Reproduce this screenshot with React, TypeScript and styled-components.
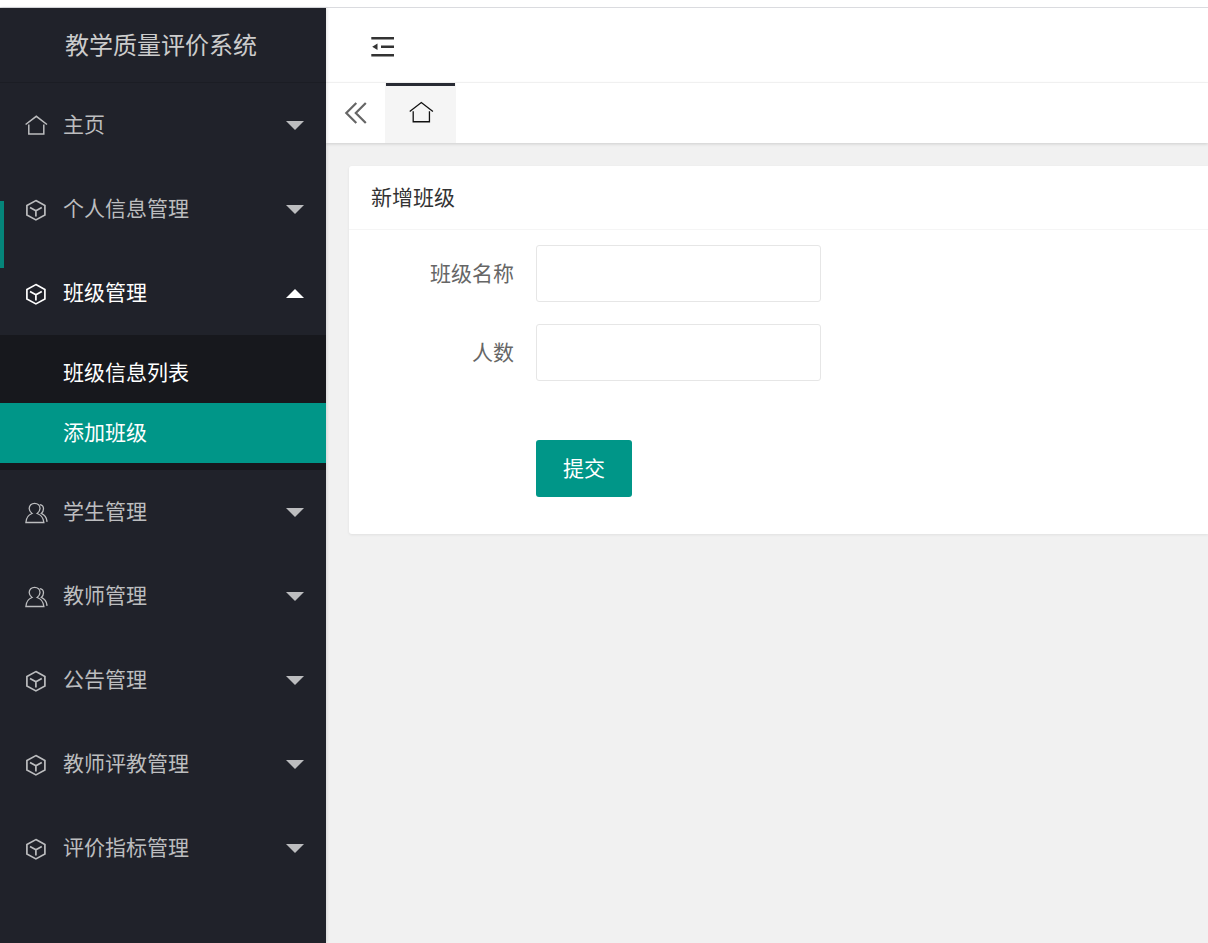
import React from 'react';
import styled, { createGlobalStyle } from 'styled-components';

const GlobalStyle = createGlobalStyle`
  *, *::before, *::after { box-sizing: border-box; }
  body {
    margin: 0;
    background: #f1f1f1;
    color: #333;
    font-family: "Liberation Sans", "Noto Sans CJK SC", sans-serif;
    font-size: 21px;
    line-height: 32px;
  }
  ul { list-style: none; margin: 0; padding: 0; }
  button, input { font: inherit; }
`;

const Page = styled.div`
  display: flex;
  flex-direction: column;
  min-height: 100vh;
`;

const TopStrip = styled.div`
  height: 8px;
  background: #fff;
  border-bottom: 1px solid #dadbdf;
`;

const Shell = styled.div`
  display: flex;
  flex: 1;
`;

const Sidebar = styled.aside`
  flex: none;
  width: 326px;
  background: #20222a;
  box-shadow: 1px 0 3px rgba(0, 0, 0, 0.12);
  z-index: 1;
`;

const Logo = styled.h1`
  display: flex;
  align-items: center;
  justify-content: center;
  height: 75px;
  margin: 0;
  padding: 2px 4px 0 0;
  border-bottom: 1px solid #1b1d24;
  color: #ccc;
  font-size: 24px;
  font-weight: 400;
`;

const Nav = styled.nav`
  position: relative;
`;

const HoverBar = styled.span`
  position: absolute;
  left: 0;
  top: 118px;
  width: 4px;
  height: 67px;
  background: #05857a;
`;

const MenuButton = styled.button<{ $open?: boolean }>`
  display: flex;
  align-items: center;
  width: 100%;
  height: 84px;
  padding: 0 22px 0 24px;
  border: 0;
  background: transparent;
  color: ${(p) => (p.$open ? '#fff' : '#bcbdbf')};
  text-align: left;
  cursor: pointer;

  svg { flex: none; }
`;

const MenuLabel = styled.span`
  flex: 1;
  padding-left: 15px;
`;

const Caret = styled.span<{ $up?: boolean }>`
  border: 9px solid transparent;
  border-width: ${(p) => (p.$up ? '0 9px 9px' : '9px 9px 0')};
  border-bottom-color: ${(p) => (p.$up ? 'currentColor' : 'transparent')};
  border-top-color: ${(p) => (p.$up ? 'transparent' : 'currentColor')};
`;

const SubMenu = styled.ul`
  && { padding: 8px 0 7px; }
  background: #17181d;
`;

const SubLink = styled.a<{ $active?: boolean }>`
  display: flex;
  align-items: center;
  height: 60px;
  padding-left: 63px;
  background: ${(p) => (p.$active ? '#009688' : 'transparent')};
  color: #fff;
  text-decoration: none;
`;

const Main = styled.div`
  display: flex;
  flex-direction: column;
  flex: 1;
  min-width: 0;
`;

const Header = styled.header`
  display: flex;
  align-items: center;
  height: 75px;
  padding: 0 43px;
  background: #fff;
  border-bottom: 1px solid #f6f6f6;
`;

const IconButton = styled.button`
  display: flex;
  align-items: center;
  justify-content: center;
  padding: 0;
  border: 0;
  background: transparent;
  color: #333;
  cursor: pointer;
`;

const TabBar = styled.div`
  display: flex;
  height: 60px;
  background: #fff;
  box-shadow: 0 1px 3px rgba(0, 0, 0, 0.15);
`;

const ScrollLeft = styled(IconButton)`
  width: 59px;
  color: #666;
`;

const Tab = styled(IconButton)`
  position: relative;
  width: 71px;
  padding-bottom: 2px;
  background: #f5f5f5;
  color: #111;

  &::before {
    content: "";
    position: absolute;
    inset: 0 1px auto;
    height: 3px;
    background: #292b34;
  }
`;

const Content = styled.main`
  padding: 23px 0 23px 23px;
`;

const Card = styled.section`
  background: #fff;
  border-radius: 3px 0 0 3px;
  box-shadow: 0 1px 3px rgba(0, 0, 0, 0.07);
`;

const CardTitle = styled.h2`
  margin: 0;
  padding: 16px 22px 15px;
  border-bottom: 1px solid #f5f5f5;
  color: #333;
  font-size: 21px;
  font-weight: 400;
`;

const Form = styled.form`
  display: flex;
  flex-direction: column;
  gap: 22px;
  padding: 15px 22px 37px 0;
`;

const Field = styled.div`
  display: flex;
  align-items: center;
`;

const FieldLabel = styled.label`
  width: 187px;
  padding-right: 22px;
  color: #666;
  text-align: right;
`;

const TextInput = styled.input`
  width: 285px;
  height: 57px;
  padding: 0 14px;
  border: 1px solid #e6e6e6;
  border-radius: 3px;
  background: #fff;
  outline: none;
`;

const Actions = styled.div`
  padding: 37px 0 0 187px;
`;

const Submit = styled.button`
  display: block;
  width: 96px;
  height: 57px;
  padding: 0;
  border: 0;
  border-radius: 3px;
  background: #009688;
  color: #fff;
  cursor: pointer;
`;

const HomeIcon = ({ size, stroke }: { size: number; stroke: number }) => (
  <svg width={size} height={size} viewBox="0 0 24 24" fill="none" stroke="currentColor" strokeWidth={stroke} aria-hidden="true">
    <path d="M1.6 11.5 12.300 3.300l10.700 8.200M4.800 11.400V21h15v-9.600" />
  </svg>
);

const CubeIcon = () => (
  <svg width="24" height="24" viewBox="0 0 24 24" fill="none" stroke="currentColor" strokeWidth="1.7" aria-hidden="true">
    <path d="M11.900 3.600 20.900 8.400v9.700l-9 4.800-9-4.800V8.400Z" />
    <path d="M6 10.400l5.900 3.300 5.900-3.300M11.900 13.700v5.800" />
  </svg>
);

const UsersIcon = () => (
  <svg width="24" height="24" viewBox="0 0 24 24" fill="none" stroke="currentColor" strokeWidth="1.3" aria-hidden="true">
    <path d="M8 13.500C6.200 12.200 5.200 10.500 5.200 8.600 5.200 5.500 7.500 3.300 10.600 3.300s5.400 2.200 5.400 5.300c0 1.900-1 3.600-2.800 4.900 3.600 1.200 6.200 4.400 6.700 9H1.900c.3-4.600 2.600-7.800 6.100-9Z" />
    <path d="M15.800 4.700c2.500.4 3.700 2 3.700 4.100 0 2-.8 3.500-2.200 4.600 3.200 1.500 5.200 4.100 5.700 7.600h-.9" />
  </svg>
);

const CollapseIcon = () => (
  <svg width="28" height="24" viewBox="0 0 28 24" fill="currentColor" aria-hidden="true">
    <path d="M2.300 3.900H25v2.700H2.300ZM12 12.500h13v2.500H12ZM2.300 20.900H25v2.700H2.300ZM3.200 13.800 8.500 10.600v6.400Z" />
  </svg>
);

const DoubleLeftIcon = () => (
  <svg width="24" height="24" viewBox="0 0 24 24" fill="none" stroke="currentColor" strokeWidth="2.2" aria-hidden="true">
    <path d="M12.300 2 2.300 12l10 10M21.800 2 11.800 12l10 10" />
  </svg>
);

const menu = [
  { label: '主页', icon: <HomeIcon size={24} stroke={1.5} /> },
  { label: '个人信息管理', icon: <CubeIcon /> },
  { label: '班级管理', icon: <CubeIcon />, children: ['班级信息列表', '添加班级'] },
  { label: '学生管理', icon: <UsersIcon /> },
  { label: '教师管理', icon: <UsersIcon /> },
  { label: '公告管理', icon: <CubeIcon /> },
  { label: '教师评教管理', icon: <CubeIcon /> },
  { label: '评价指标管理', icon: <CubeIcon /> },
];

export default function App() {
  return (
    <>
      <GlobalStyle />
      <Page>
        <TopStrip />
        <Shell>
          <Sidebar>
            <Logo>教学质量评价系统</Logo>
            <Nav>
              <ul>
                {menu.map(({ label, icon, children }) => (
                  <li key={label}>
                    <MenuButton type="button" $open={!!children} aria-expanded={!!children}>
                      {icon}
                      <MenuLabel>{label}</MenuLabel>
                      <Caret $up={!!children} />
                    </MenuButton>
                    {children && (
                      <SubMenu>
                        {children.map((item) => (
                          <li key={item}>
                            <SubLink href="#" $active={item === '添加班级'}>{item}</SubLink>
                          </li>
                        ))}
                      </SubMenu>
                    )}
                  </li>
                ))}
              </ul>
              <HoverBar />
            </Nav>
          </Sidebar>
          <Main>
            <Header>
              <IconButton type="button" aria-label="侧边伸缩"><CollapseIcon /></IconButton>
            </Header>
            <TabBar>
              <ScrollLeft type="button" aria-label="向左"><DoubleLeftIcon /></ScrollLeft>
              <Tab type="button" aria-label="主页"><HomeIcon size={26} stroke={1.2} /></Tab>
            </TabBar>
            <Content>
              <Card>
                <CardTitle>新增班级</CardTitle>
                <Form onSubmit={(e) => e.preventDefault()}>
                  <Field>
                    <FieldLabel htmlFor="className">班级名称</FieldLabel>
                    <TextInput id="className" type="text" />
                  </Field>
                  <Field>
                    <FieldLabel htmlFor="count">人数</FieldLabel>
                    <TextInput id="count" type="text" />
                  </Field>
                  <Actions>
                    <Submit type="submit">提交</Submit>
                  </Actions>
                </Form>
              </Card>
            </Content>
          </Main>
        </Shell>
      </Page>
    </>
  );
}
